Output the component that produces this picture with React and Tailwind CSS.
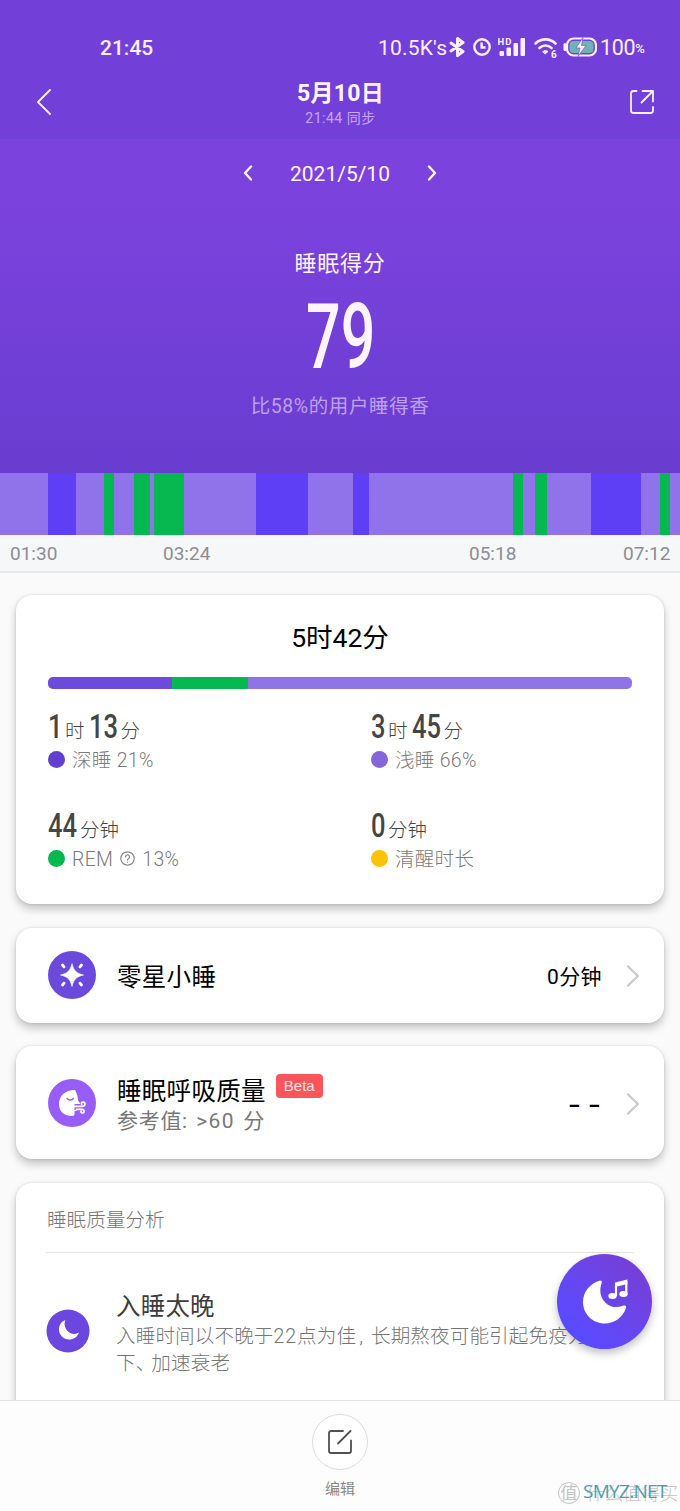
const STAGES = [
  ['light', 48], ['deep', 28], ['light', 28], ['rem', 10], ['light', 20], ['rem', 16], ['light', 4], ['rem', 30],
  ['light', 72], ['deep', 52], ['light', 45], ['deep', 16], ['light', 144], ['rem', 10], ['light', 12], ['rem', 12],
  ['light', 44], ['deep', 50], ['light', 19], ['rem', 10], ['light', 10],
]

const STAGE_COLORS = {
  light: 'bg-[#9073ea]',
  deep: 'bg-[#5f3ff5]',
  rem: 'bg-[#05b84f]',
}

// Tall narrow digits: regular digits squeezed horizontally inside a fixed box
function Digits({ children, className, inner = '' }) {
  return (
    <span className={`inline-block shrink-0 whitespace-nowrap ${className}`}>
      <span className={`inline-block origin-left ${inner}`}>{children}</span>
    </span>
  )
}

function StatusBar() {
  return (
    <div className="flex h-[30px] items-center text-[21px] leading-[30px] text-[#fbeeff]">
      <span className="ml-[100px] mt-px w-[278px] font-medium">21:45</span>
      <span className="mt-px w-[71px] tracking-[0.2px]">10.5K's</span>
      <svg width="17" height="20" viewBox="0 0 17 20" fill="none" stroke="currentColor" strokeWidth="3" strokeLinejoin="round" strokeLinecap="round">
        <path d="M2 6l12 8.5-5.500 4v-17l5.500 4L2 14" />
      </svg>
      <svg className="ml-[7px]" width="18" height="18" viewBox="0 0 18 18" fill="none" stroke="currentColor" strokeWidth="2.4">
        <circle cx="9" cy="9" r="7.7" />
        <path d="M8.6 4.5v5h4" />
      </svg>
      <svg className="ml-[7px]" width="28" height="20" viewBox="0 0 28 20" fill="currentColor">
        <text x="-0.5" y="7.5" fontSize="9.5" fontWeight="700" textLength="14">HD</text>
        <rect x="1.5" y="14" width="4.5" height="5" rx="1" />
        <rect x="8.5" y="10.5" width="4.5" height="8.5" rx="1" />
        <rect x="15.5" y="6" width="4.5" height="13" rx="1" />
        <rect x="22.5" y="1" width="4.5" height="18" rx="1" />
      </svg>
      <svg className="ml-[7px]" width="26" height="22" viewBox="0 0 26 22" fill="none" stroke="currentColor" strokeWidth="2.6" strokeLinecap="round">
        <path d="M2.500 7.500c5.500-5.500 14.500-5.500 20 0" />
        <path d="M6.500 12c3.500-3.300 8.500-3.300 12 0" />
        <path d="M10 15.500c1.500-1.200 3.500-1.200 5 0l-2.500 2.200z" fill="currentColor" strokeWidth="1" />
        <text x="18" y="21.5" fontSize="10" fontWeight="700" fill="currentColor" stroke="none">6</text>
      </svg>
      <svg className="ml-[4px]" width="34" height="20" viewBox="0 0 34 20">
        <rect x="4" y="1.5" width="29" height="17" rx="6.5" fill="none" stroke="currentColor" strokeWidth="2.2" />
        <path d="M2 7.500v5" stroke="currentColor" strokeWidth="3" strokeLinecap="round" />
        <rect x="6.5" y="4" width="24" height="12" rx="4" fill="#6fb3b5" />
        <path d="M20 0.500l-7 10.500h4l-2 8.500 8-11h-4.500z" fill="currentColor" stroke="#7240d8" strokeWidth="0.6" />
      </svg>
      <span className="ml-[3px] mt-px text-[21.5px] tracking-[-0.3px]">100</span>
      <span className="mt-1 text-[13px] font-medium">%</span>
    </div>
  )
}

function Header() {
  return (
    <header className="h-[139px] bg-[#7240d8] pt-8">
      <StatusBar />
      <div className="flex h-[70px] items-center justify-between pl-9 pr-[25px] pt-2.5">
        <svg width="16" height="26" viewBox="0 0 16 26" fill="none" stroke="#fbeeff" strokeWidth="1.8" strokeLinecap="round" strokeLinejoin="round">
          <path d="M14 1L2 13l12 12" />
        </svg>
        <div className="pt-[3px] text-center">
          <h1 className="text-[23px] font-bold leading-[30px] tracking-[0.3px] text-[#fff4ff]">5月10日</h1>
          <p className="-mt-px text-sm leading-5 tracking-[0.5px] text-[#c5a6f1]">21:44 同步</p>
        </div>
        <svg className="-mt-px" width="26" height="26" viewBox="0 0 26 26" fill="none" stroke="#fbeeff" strokeWidth="1.8" strokeLinecap="round" strokeLinejoin="round">
          <path d="M7.500 2H4.500A2.500 2.500 0 0 0 2 4.500v17A2.500 2.500 0 0 0 4.500 24h17a2.500 2.500 0 0 0 2.500-2.500v-3.500" />
          <path d="M13.500 2H24v10.500M23.500 2.500L12.500 13.500" />
        </svg>
      </div>
    </header>
  )
}

function Score() {
  return (
    <section className="flex h-[334px] flex-col items-center bg-linear-to-b from-[#7b42dd] from-20% to-[#693dd0] text-[#fff4ff]">
      <div className="flex h-[68px] items-center">
        <svg width="12" height="16" viewBox="0 0 12 16" fill="none" stroke="currentColor" strokeWidth="2.4" strokeLinecap="round" strokeLinejoin="round">
          <path d="M9 1.500L3 8l6 6.500" />
        </svg>
        <span className="mt-[3px] w-[172px] text-center text-[21px]">2021/5/10</span>
        <svg width="12" height="16" viewBox="0 0 12 16" fill="none" stroke="currentColor" strokeWidth="2.4" strokeLinecap="round" strokeLinejoin="round">
          <path d="M3 1.500L9 8l-6 6.500" />
        </svg>
      </div>
      <h2 className="mt-[41px] text-[22px] leading-8 tracking-[0.7px]">睡眠得分</h2>
      <Digits className="mt-[12px] h-[90px] w-[69px] text-[91px] leading-[90px] font-medium" inner="scale-x-[0.670]">79</Digits>
      <p className="mt-[9px] text-[19.5px] leading-8 tracking-[0.6px] text-[#bd9ff0]">比58%的用户睡得香</p>
    </section>
  )
}

function SleepChart() {
  return (
    <section>
      <div className="flex h-[62px]">
        {STAGES.map(([stage, width], i) => (
          <div key={i} className={STAGE_COLORS[stage]} style={{ width }} />
        ))}
      </div>
      <div className="flex h-[38px] items-center border-b-2 border-[#e8e9ec] bg-[#f6f7f9] pl-2.5 pt-0.5 text-[19px] text-[#8d8d90]">
        <span className="w-[153px]">01:30</span>
        <span className="w-[306px]">03:24</span>
        <span className="w-[154px]">05:18</span>
        <span>07:12</span>
      </div>
    </section>
  )
}

function Card({ className = '', children }) {
  return (
    <section className={`rounded-2xl bg-white shadow-[0_5px_9px_rgba(0,0,0,0.22),0_0_3px_rgba(0,0,0,0.12)] ${className}`}>
      {children}
    </section>
  )
}

function HelpIcon() {
  return (
    <svg className="mx-[7px] -mt-0.5" width="15" height="15" viewBox="0 0 15 15" fill="none" stroke="#8a8a8a" strokeWidth="1.2" strokeLinecap="round">
      <circle cx="7.5" cy="7.5" r="6.7" />
      <path d="M5.500 6a2 2 0 1 1 2.800 1.800c-.6.300-.8.600-.8 1.200M7.500 11v.200" />
    </svg>
  )
}

function Stat({ parts, dot, children }) {
  return (
    <div className="h-[99px]">
      <div className="flex h-[34px] items-baseline text-[#454545]">
        {parts.map(([value, unit]) => (
          <span key={unit} className="mr-1 flex items-baseline">
            <Digits
              className={`text-[34px] leading-[34px] font-medium ${value.length > 1 ? 'w-[32px]' : 'w-[17px]'}`}
              inner="scale-x-[0.750]"
            >
              {value}
            </Digits>
            <span className="text-[19.5px] font-light text-[#444]">{unit}</span>
          </span>
        ))}
      </div>
      <div className="mt-0.5 flex h-7 items-center text-[19.5px] font-light tracking-[0.3px] text-[#7a7a7a]">
        <span className={`mr-[7px] size-[17px] rounded-full ${dot}`} />
        <span className="mt-[3px] flex items-center whitespace-pre">{children}</span>
      </div>
    </div>
  )
}

function Summary() {
  return (
    <Card className="h-[309px] px-8 pt-6">
      <h2 className="pt-px text-center text-[26.5px] leading-9 text-black">5时42分</h2>
      <div className="mt-[21px] flex h-3 overflow-hidden rounded-[5px]">
        <div className="w-[124px] bg-[#6c4bdc]" />
        <div className="w-[76px] bg-[#05b84f]" />
        <div className="flex-1 bg-[#9073e6]" />
      </div>
      <div className="mt-5 grid grid-cols-[323px_1fr]">
        <Stat parts={[['1', '时'], ['13', '分']]} dot="bg-[#6140cf]">深睡 21%</Stat>
        <Stat parts={[['3', '时'], ['45', '分']]} dot="bg-[#8465da]">浅睡 66%</Stat>
        <Stat parts={[['44', '分钟']]} dot="bg-[#05b84f]">REM<HelpIcon />13%</Stat>
        <Stat parts={[['0', '分钟']]} dot="bg-[#fcc204]">清醒时长</Stat>
      </div>
    </Card>
  )
}

function Chevron() {
  return (
    <svg className="ml-6 mt-0.5" width="14" height="22" viewBox="0 0 14 22" fill="none" stroke="#c9c9c9" strokeWidth="2.2" strokeLinecap="round" strokeLinejoin="round">
      <path d="M2 1.500l10 9.500-10 9.500" />
    </svg>
  )
}

function NapCard() {
  return (
    <Card className="flex h-[95px] items-center pl-8 pr-6">
      <svg width="48" height="48" viewBox="0 0 48 48">
        <circle cx="24" cy="24" r="24" fill="#6b49dc" />
        <path d="M24 12.500c1.500 7 4.500 10 11.500 11.500-7 1.500-10 4.500-11.500 11.500-1.500-7-4.500-10-11.500-11.500 7-1.500 10-4.500 11.500-11.500z" fill="#fff" stroke="#fff" strokeWidth="0.6" />
        <path d="M14.500 14l1.500 1.800M33.500 14l-1.500 1.800M14.500 34l1.500-1.800M33.500 34l-1.500-1.800" stroke="#fff" strokeWidth="2.8" strokeLinecap="round" />
      </svg>
      <h3 className="ml-[21px] flex-1 pt-1.5 text-[24.5px] tracking-[0.3px] text-black">零星小睡</h3>
      <span className="pt-[5px] text-[21px] tracking-[0.4px] text-black">0分钟</span>
      <Chevron />
    </Card>
  )
}

function BreathCard() {
  return (
    <Card className="flex h-[113px] items-center pl-8 pr-6">
      <svg width="48" height="48" viewBox="0 0 48 48">
        <circle cx="24" cy="24" r="24" fill="#985cf8" />
        <path d="M27 11C17 11 11 17 11 25s5.500 12 13 12c1.700 0 2.500-.7 2.500-2v-2.500L31 30l1.500-5-2.500-3.500c0-3.500-1-7-3-10.500z" fill="#fff" />
        <path d="M19 19.500c1.500 2 5 2 6.500 0" fill="none" stroke="#985cf8" strokeWidth="1.4" strokeLinecap="round" />
        <path d="M26.500 28h8" fill="none" stroke="#985cf8" strokeWidth="6" />
        <path d="M32 24.500h3" fill="none" stroke="#985cf8" strokeWidth="4" />
        <path d="M26.500 27.300h7.500c3.600 0 3.800-4 1.200-4.200-1.700-.1-2.200 1.200-1.600 2.200M28.500 30.300h5.500c2.800 0 2.800 3.700.4 3.700-1.300 0-1.700-1-1.200-1.800" fill="none" stroke="#fff" strokeWidth="1.7" strokeLinecap="round" />
      </svg>
      <div className="ml-[21px] flex-1 pt-1">
        <div className="flex items-center">
          <h3 className="pt-px text-[24.5px] leading-[34px] tracking-[0.3px] text-black">睡眠呼吸质量</h3>
          <span className="mb-[11px] ml-2.5 h-6 rounded bg-[#f9555a] px-2 font-['Liberation_Sans',sans-serif] text-[15px] leading-6 text-[#ffe3e3]">Beta</span>
        </div>
        <p className="-mt-0.5 text-[21px] leading-7 tracking-[0.7px] text-[#777] [word-spacing:2.5px]">参考值: <span className="tracking-[1.3px]">&gt;60</span> 分</p>
      </div>
      <span className="flex gap-2.5 font-['Inter',sans-serif] text-[23px] font-medium leading-[34px] text-black">
        <span className="mt-1 scale-x-125">-</span>
        <span className="mr-0.5 mt-1 scale-x-125">-</span>
      </span>
      <Chevron />
    </Card>
  )
}

function Analysis() {
  return (
    <Card className="h-[240px] px-[30px]">
      <h3 className="h-[70px] border-b border-[#e2e2e2] pl-px pt-[23px] text-[19.6px] leading-[30px] font-light text-[#757575]">睡眠质量分析</h3>
      <div className="flex items-start pt-[37px]">
        <svg className="mt-[19px] shrink-0" width="44" height="44" viewBox="0 0 44 44">
          <circle cx="22" cy="22" r="21.5" fill="#6b47e0" />
          <path d="M19.500 11c-4.500 1.500-6.500 5.500-6.500 9.500 0 5.500 4.500 10 10 10 4.500 0 8.500-2.500 10-7-3 2-8 2-11-1s-4.500-7.500-2.500-11.500z" fill="#fff" />
        </svg>
        <div className="ml-[26px] whitespace-nowrap">
          <h4 className="text-[24.5px] leading-[34px] tracking-[0.2px] text-[#3c3c3c]">入睡太晚</h4>
          <p className="-mt-px text-[19.6px] leading-[27px] font-light tracking-[0.1px] text-[#757575]">
            入睡时间以不晚于<span className="tracking-[0.9px]">22</span>点为佳<span className="mr-[3px] pl-[3px]">, </span>长期熬夜可能引起免疫力
            <br />
            下<span className="tracking-[-4px]">、</span>加速衰老
          </p>
        </div>
      </div>
    </Card>
  )
}

function MusicButton() {
  return (
    <button className="absolute left-[557px] top-[1254px] size-[95px] rounded-full bg-linear-to-tr from-[#5a4aff] from-20% to-[#7a3cd0] shadow-[0_4px_9px_rgba(0,0,0,0.25)]">
      <svg width="95" height="95" viewBox="0 0 95 95" fill="#fff">
        <path d="M43 26.500c1.500 0 2.200.8 1.700 2.200-2.800 8-1.200 15 3.800 20 5 4.800 11 5.500 17.500 3 2.200-.8 3.700.2 3 2.300-3 9-11.500 15.500-21 15.500-12.500 0-22-9.500-22-21.500 0-10.500 7.500-19 17-21.500z" />
        <path d="M59 42V31l10.300-3v12.500" fill="none" stroke="#fff" strokeWidth="2.2" strokeLinejoin="round" />
        <path d="M58 28.500l12.400-3v4.500L58 33z" />
        <ellipse cx="55.5" cy="42" rx="4.2" ry="3" />
        <ellipse cx="66.5" cy="40" rx="4.2" ry="3" />
      </svg>
    </button>
  )
}

function BottomBar() {
  return (
    <footer className="absolute inset-x-0 bottom-0 flex h-[111px] flex-col items-center border-t border-[#e2e2e2] bg-[#fdfdfd] pt-[13px]">
      <button className="flex size-14 items-center justify-center rounded-full border border-[#dcdcdc] bg-white">
        <svg width="26" height="26" viewBox="0 0 26 26" fill="none" stroke="#505050" strokeWidth="1.8" strokeLinecap="round" strokeLinejoin="round">
          <path d="M16 2H4a2 2 0 0 0-2 2v18a2 2 0 0 0 2 2h18a2 2 0 0 0 2-2V11.500M23.500 2L11 14.500" />
        </svg>
      </button>
      <span className="mt-[9px] text-[15px] leading-5 text-[#858585]">编辑</span>
    </footer>
  )
}

function Watermark() {
  return (
    <div className="absolute bottom-1 right-[3px] flex h-7 items-center whitespace-nowrap text-[#c4c4c4]">
      <span className="size-[22px] rounded-full border border-[#c4c4c4] text-center text-[17px] leading-5">值</span>
      <span className="ml-1.5 w-[91px] pt-1 text-[18.5px] font-light text-[#c4c4c4]">什么值得买</span>
      <span className="absolute left-[25px] top-0 font-['Open_Sans',sans-serif] text-[19px] leading-6 tracking-[-0.7px] text-[#4c9fb3]">SMYZ.NET</span>
    </div>
  )
}

export default function App() {
  return (
    <div className="relative h-[1511px] w-[680px] overflow-hidden bg-[#fafafa] font-['Roboto','Noto_Sans_CJK_SC',sans-serif]">
      <Header />
      <Score />
      <SleepChart />
      <main className="flex flex-col gap-[23.5px] px-4 pt-[22px]">
        <Summary />
        <NapCard />
        <BreathCard />
        <Analysis />
      </main>
      <BottomBar />
      <MusicButton />
      <Watermark />
    </div>
  )
}
